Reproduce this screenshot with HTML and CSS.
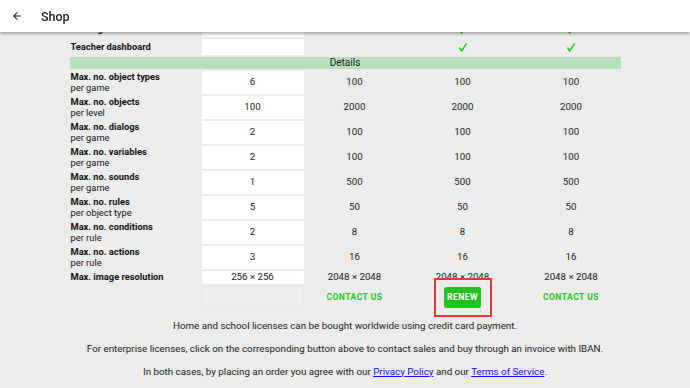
FILE: index.html
```html
<!DOCTYPE html>
<html lang="en">

<head>
    <meta charset="UTF-8">
    <meta name="viewport" content="width=device-width, initial-scale=1.0">
    <title>Shop</title>
    <link rel="stylesheet" href="styles.css">
</head>

<body>
    <!-- App bar -->
    <header class="app-bar">
        <span class="back">
            <svg width="12" height="12" viewBox="0 0 24 24"><path d="M20 11H7.83l5.59-5.59L12 4l-8 8 8 8 1.41-1.41L7.83 13H20v-2z" fill="#212121"/></svg>
        </span>
        <span class="title">Shop</span>
    </header>

    <!-- Plans table -->
    <main class="content">
        <table class="plans">
            <colgroup>
                <col class="c-label">
                <col class="c-free">
                <col class="c-a">
                <col class="c-b">
                <col class="c-c">
            </colgroup>
            <tr class="check-row">
                <td class="label"><b>Sharing online</b></td>
                <td class="free"></td>
                <td></td>
                <td><svg class="tick" viewBox="0 0 8 9"><path d="M0.8 5.2 L2.6 8 L7.4 0.8"/></svg></td>
                <td><svg class="tick" viewBox="0 0 8 9"><path d="M0.8 5.2 L2.6 8 L7.4 0.8"/></svg></td>
            </tr>
            <tr class="check-row">
                <td class="label"><b>Teacher dashboard</b></td>
                <td class="free"></td>
                <td></td>
                <td><svg class="tick" viewBox="0 0 8 9"><path d="M0.8 5.2 L2.6 8 L7.4 0.8"/></svg></td>
                <td><svg class="tick" viewBox="0 0 8 9"><path d="M0.8 5.2 L2.6 8 L7.4 0.8"/></svg></td>
            </tr>
            <tr>
                <td class="section" colspan="5">Details</td>
            </tr>
            <tr>
                <td class="label"><b>Max. no. object types</b><br>per game</td>
                <td class="free">6</td>
                <td>100</td>
                <td>100</td>
                <td>100</td>
            </tr>
            <tr>
                <td class="label"><b>Max. no. objects</b><br>per level</td>
                <td class="free">100</td>
                <td>2000</td>
                <td>2000</td>
                <td>2000</td>
            </tr>
            <tr>
                <td class="label"><b>Max. no. dialogs</b><br>per game</td>
                <td class="free">2</td>
                <td>100</td>
                <td>100</td>
                <td>100</td>
            </tr>
            <tr>
                <td class="label"><b>Max. no. variables</b><br>per game</td>
                <td class="free">2</td>
                <td>100</td>
                <td>100</td>
                <td>100</td>
            </tr>
            <tr>
                <td class="label"><b>Max. no. sounds</b><br>per game</td>
                <td class="free">1</td>
                <td>500</td>
                <td>500</td>
                <td>500</td>
            </tr>
            <tr>
                <td class="label"><b>Max. no. rules</b><br>per object type</td>
                <td class="free">5</td>
                <td>50</td>
                <td>50</td>
                <td>50</td>
            </tr>
            <tr>
                <td class="label"><b>Max. no. conditions</b><br>per rule</td>
                <td class="free">2</td>
                <td>8</td>
                <td>8</td>
                <td>8</td>
            </tr>
            <tr>
                <td class="label"><b>Max. no. actions</b><br>per rule</td>
                <td class="free">3</td>
                <td>16</td>
                <td>16</td>
                <td>16</td>
            </tr>
            <tr>
                <td class="label"><b>Max. image resolution</b></td>
                <td class="free">256 × 256</td>
                <td>2048 × 2048</td>
                <td>2048 × 2048</td>
                <td>2048 × 2048</td>
            </tr>
            <tr class="actions">
                <td></td>
                <td class="free-empty"></td>
                <td><a class="text-btn">CONTACT US</a></td>
                <td><span class="highlight"><a class="renew-btn">RENEW</a></span></td>
                <td><a class="text-btn">CONTACT US</a></td>
            </tr>
        </table>

        <!-- Notes -->
        <div class="notes">
            <p>Home and school licenses can be bought worldwide using credit card payment.</p>
            <p>For enterprise licenses, click on the corresponding button above to contact sales and buy through an invoice with IBAN.</p>
            <p>In both cases, by placing an order you agree with our <a href="#">Privacy Policy</a> and our <a href="#">Terms of Service</a>.</p>
        </div>
    </main>
</body>

</html>
```

FILE: styles.css
```css
/* Reset */
* {
    margin: 0;
    padding: 0;
    box-sizing: border-box;
    font-family: 'Roboto', 'Liberation Sans', sans-serif;
}

body {
    background-color: #ececec;
    color: #212121;
    overflow: hidden;
}

/* App bar */
.app-bar {
    position: fixed;
    top: 0;
    left: 0;
    width: 100%;
    height: 32px;
    background-color: #fff;
    display: flex;
    align-items: center;
    box-shadow: 0 2px 3px rgba(0, 0, 0, 0.3);
    z-index: 10;
}

.back {
    display: flex;
    width: 41px;
    padding-left: 11px;
}

.title {
    font-size: 12.5px;
    font-weight: 500;
}

/* Table */
.content {
    padding-top: 19px;
}

.plans {
    margin: 0 auto;
    border-spacing: 2px;
    table-layout: fixed;
    width: 555px;
    font-size: 9.7px;
    line-height: 10.5px;
}

.c-label { width: 130px; }
.c-free { width: 102px; }
.c-a { width: 98px; }
.c-b { width: 114px; }
.c-c { width: 99px; }

.plans td {
    text-align: center;
    vertical-align: middle;
    padding: 1px 0;
    color: #212121;
}

.plans td.label {
    text-align: left;
    padding-left: 1px;
    font-size: 9.3px;
    color: #111;
}

.plans td.free {
    background-color: #fff;
}

.check-row td {
    height: 16px;
}

.tick {
    display: block;
    width: 8px;
    height: 9px;
    margin: 0 auto;
    fill: none;
    stroke: #22c722;
    stroke-width: 1.5;
    stroke-linecap: round;
    stroke-linejoin: round;
}

.plans td.section {
    background-color: #b7dfbc;
    height: 12px;
    padding: 0;
    font-size: 10px;
    line-height: 12px;
}

.actions td {
    height: 21px;
    position: relative;
}

.plans td.free-empty {
    background-color: #ededed;
    box-shadow: inset 0 0 0 1px #e6e6e6;
}

.text-btn {
    color: #1ec31e;
    font-size: 8.5px;
    font-weight: 700;
    letter-spacing: 0.5px;
}

/* Highlighted renew button */
.highlight {
    position: relative;
    display: inline-block;
}

.highlight::before {
    content: '';
    position: absolute;
    top: -9px;
    bottom: -9px;
    left: -10px;
    right: -11px;
    border: 2px solid #e53935;
    background-color: #ececec;
}

.renew-btn {
    position: relative;
    display: inline-block;
    width: 37px;
    height: 21px;
    line-height: 21px;
    background-color: #1ec31e;
    color: #fff;
    font-size: 8.5px;
    font-weight: 700;
    letter-spacing: 0.5px;
    border-radius: 2px;
    vertical-align: middle;
}

/* Notes */
.notes {
    text-align: center;
    font-size: 9.8px;
    line-height: 12px;
    padding-top: 9px;
}

.notes p {
    margin-bottom: 11px;
}

.notes a {
    color: #1a0dff;
}
```
